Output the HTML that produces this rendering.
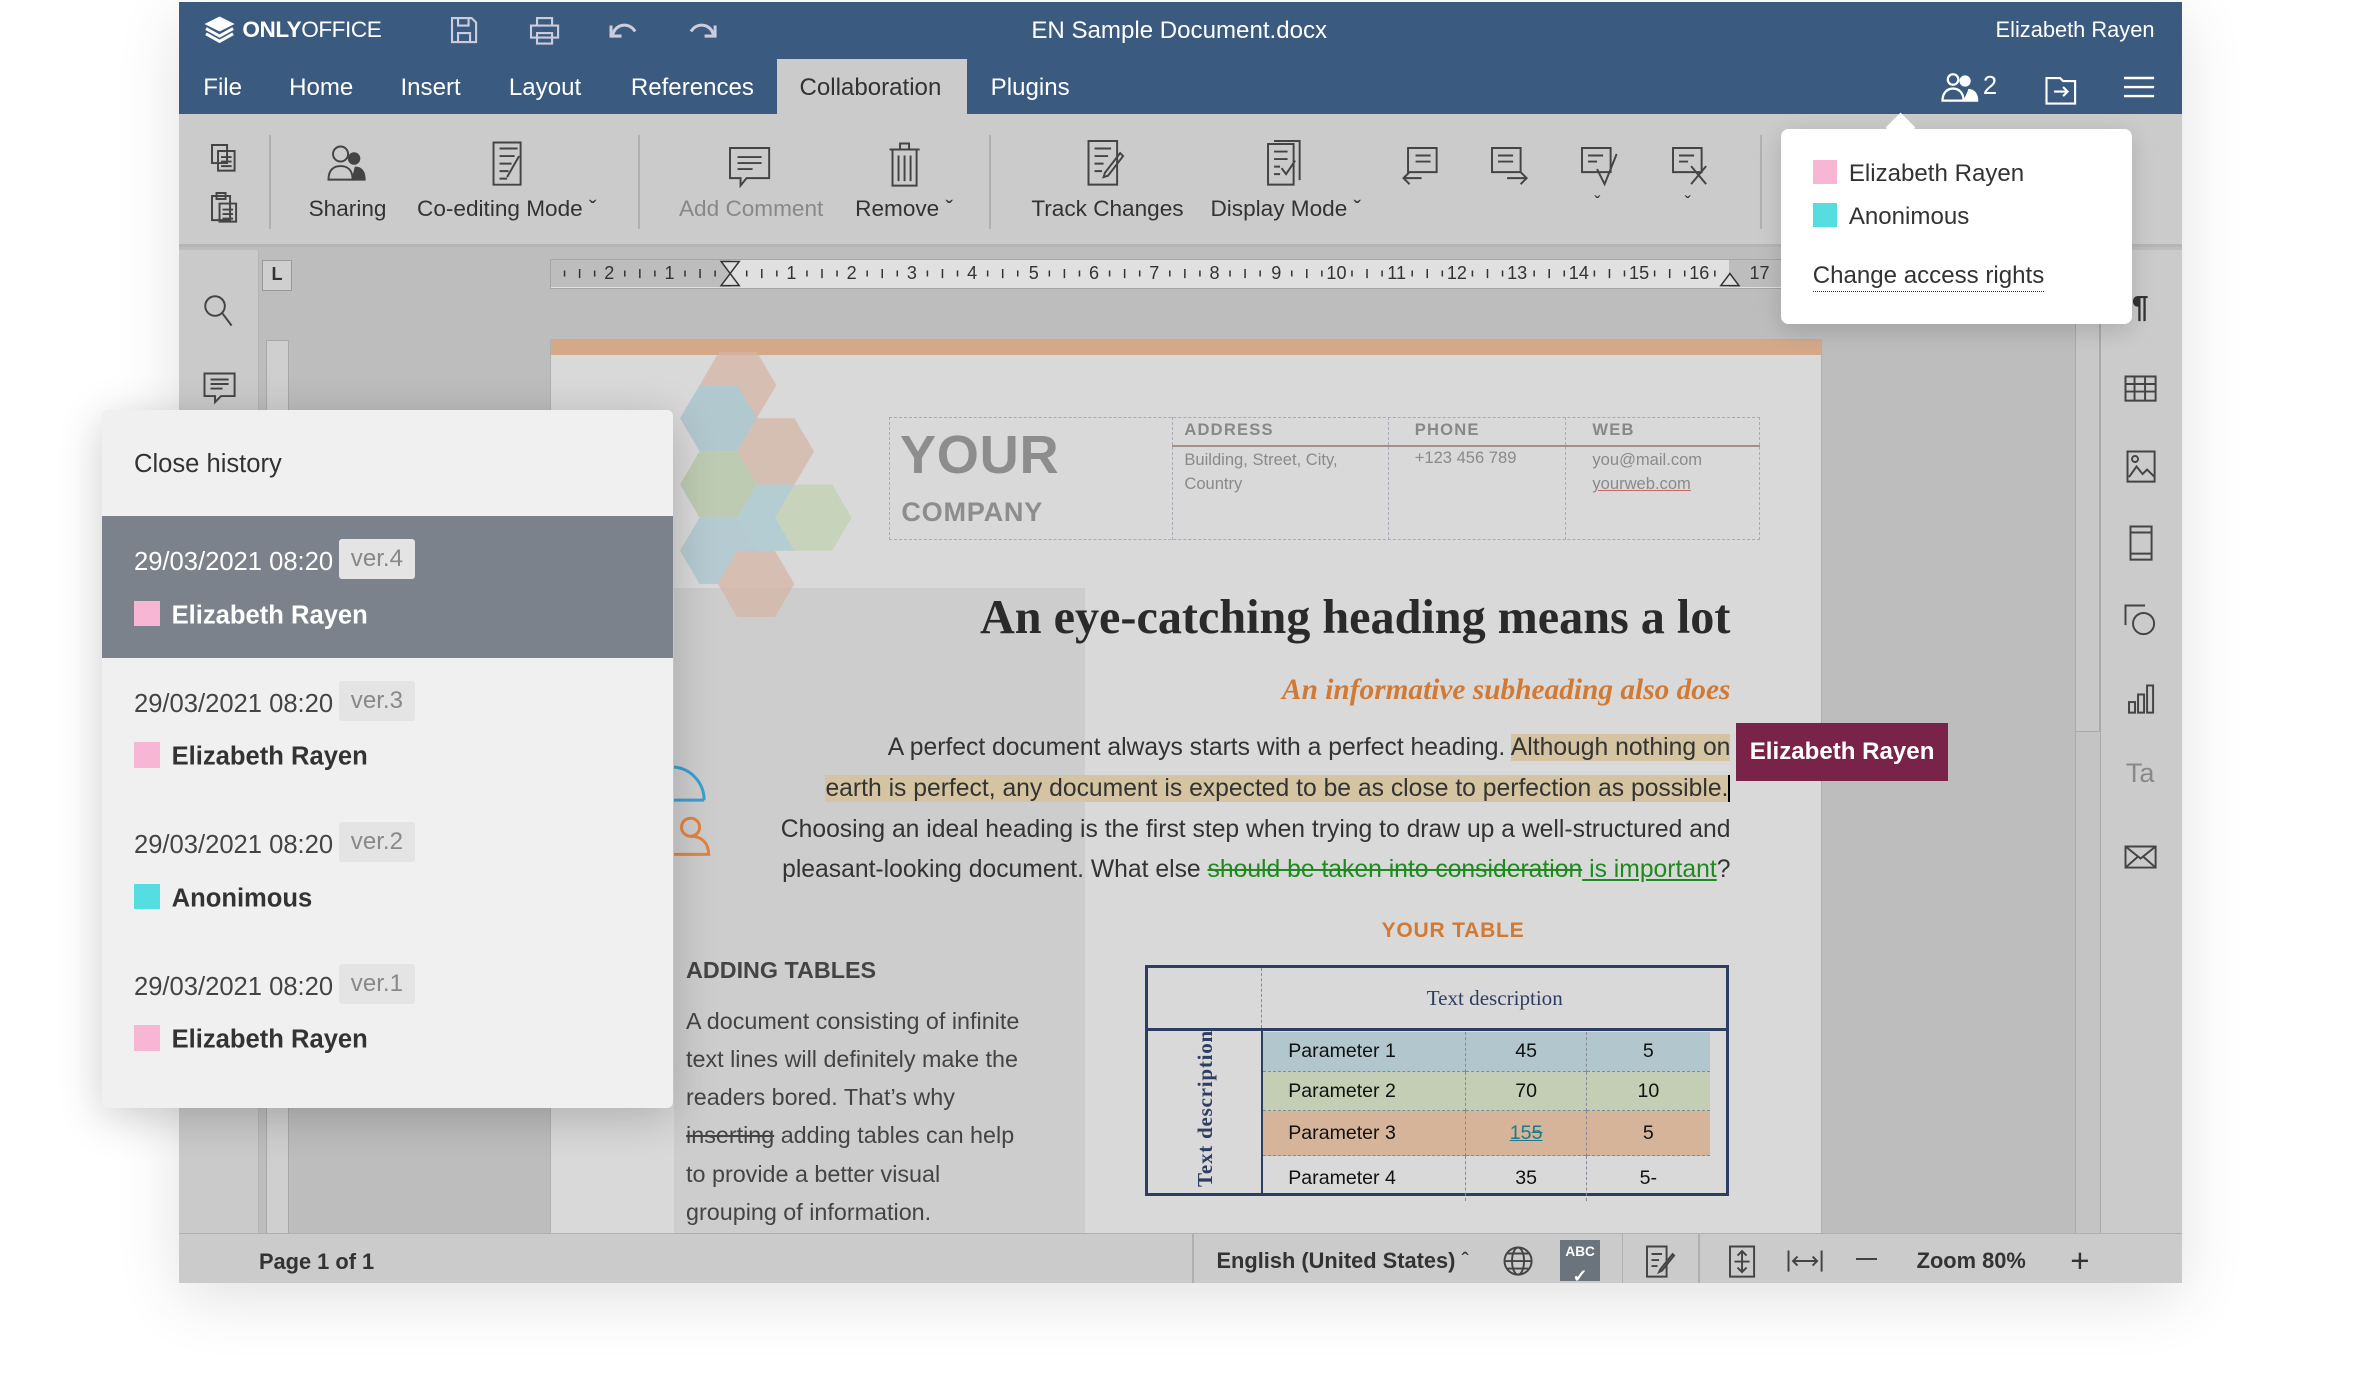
<!DOCTYPE html>
<html><head><meta charset="utf-8"><style>
*{box-sizing:border-box;margin:0;padding:0}
html,body{width:2360px;height:1380px;overflow:hidden;background:#fff}
#z{zoom:1.5056;width:1568px;height:917px;position:relative;font-family:"Liberation Sans",sans-serif;color:#333}
.a{position:absolute}
.win{left:119px;top:1px;width:1330px;height:851px;background:#bdbdbd;box-shadow:0 10px 40px rgba(0,0,0,.12);overflow:hidden}
.top{left:0;top:0;width:1330px;height:75px;background:#3a5a80;color:#fff}
.tab{top:48px;font-size:16px;color:#fff}
.tb{left:0;top:75px;width:1330px;height:88px;background:#cbcbcb;border-bottom:2px solid #b5b5b5}
.lbl{font-size:15px;color:#333;top:54px;white-space:nowrap}
.sep{top:14px;width:1px;height:62px;background:#b0b0b0}
svg.i{position:absolute;fill:none;stroke:#444;stroke-width:1.3}
.page{left:246px;top:224px;width:845px;height:600px;background:#d9d9d9;border:1px solid #b0b0b0;overflow:hidden}
.hist{left:68px;top:272px;width:379px;height:464px;background:#f0f0f0;border-radius:4px;box-shadow:0 6px 30px rgba(0,0,0,.2);overflow:hidden}
.it{position:absolute;left:0;width:379px;height:94px}
.dt{position:absolute;left:21px;top:21px;font-size:17px;color:#444}
.vr{position:absolute;left:157px;top:15px;background:#e4e4e4;color:#888;font-size:16px;padding:4px 8px;border-radius:2px}
.nm{position:absolute;left:21px;top:56px;font-size:17px;font-weight:bold;color:#333}
.sq{display:inline-block;width:17px;height:17px;vertical-align:-2px;margin-right:8px}
.body{font-size:16.4px;color:#333;line-height:27px}
td{font-size:13px;padding:0 6px}
.rn{position:absolute;top:0;font-size:12px;transform:translateX(-50%)}
</style></head><body><div id="z">
<div class="a win">
 <div class="a top">
  <svg class="a" style="left:16px;top:9px" width="22" height="20" viewBox="0 0 22 20"><path d="M11 1 L21 6 L11 11 L1 6Z" fill="#fff"/><path d="M2 9 L11 14 L20 9 M2 12.5 L11 17.5 L20 12.5" stroke="#fff" stroke-width="2" fill="none"/></svg>
  <div class="a" style="left:42px;top:10px;font-size:15px;font-weight:bold;letter-spacing:-.3px">ONLY<span style="font-weight:normal">OFFICE</span></div>
  <svg class="a" style="left:179px;top:9px" width="20" height="20" viewBox="0 0 20 20" fill="none" stroke="#ccd" stroke-width="1.4"><path d="M2 2h13l3 3v13H2z M6 2v5h7V2 M6 18v-6h8v6"/></svg>
  <svg class="a" style="left:232px;top:9px" width="22" height="20" viewBox="0 0 22 20" fill="none" stroke="#ccd" stroke-width="1.4"><path d="M6 7V2h10v5 M2 7h18v8H2z M6 12h10v7H6z"/></svg>
  <svg class="a" style="left:285px;top:11px" width="20" height="14" viewBox="0 0 20 14" fill="none" stroke="#ccd" stroke-width="2"><path d="M3 12C4 4 14 2 18 9 M2 5v7h7"/></svg>
  <svg class="a" style="left:338px;top:11px" width="20" height="14" viewBox="0 0 20 14" fill="none" stroke="#ccd" stroke-width="2"><path d="M17 12C16 4 6 2 2 9 M18 5v7h-7"/></svg>
  <div class="a" style="left:566px;top:10px;font-size:16px">EN Sample Document.docx</div>
  <div class="a" style="right:18px;top:10px;font-size:14.5px">Elizabeth Rayen</div>
  <div class="a tab" style="left:16px">File</div>
  <div class="a tab" style="left:73px">Home</div>
  <div class="a tab" style="left:147px">Insert</div>
  <div class="a tab" style="left:219px">Layout</div>
  <div class="a tab" style="left:300px">References</div>
  <div class="a" style="left:397px;top:38px;width:126px;height:37px;background:#cbcbcb"></div>
  <div class="a tab" style="left:412px;color:#333">Collaboration</div>
  <div class="a tab" style="left:539px">Plugins</div>
  <svg class="a" style="left:1170px;top:47px" width="26" height="20" viewBox="0 0 26 20" fill="none" stroke="#fff" stroke-width="1.5"><circle cx="8" cy="5" r="3.5"/><path d="M1 19c0-5 3-8 7-8s7 3 7 8z"/><circle cx="16" cy="6" r="3" fill="#fff"/><path d="M15 19h9c0-4-2-7-6-7" fill="#fff"/></svg>
  <div class="a" style="left:1198px;top:47px;font-size:17px">2</div>
  <svg class="a" style="left:1239px;top:47px" width="22" height="22" viewBox="0 0 22 22" fill="none" stroke="#fff" stroke-width="1.4"><path d="M1 4h9l2 2h8v15H1z M6 13h9 M12 10l3 3-3 3"/></svg>
  <svg class="a" style="left:1292px;top:49px" width="20" height="16" viewBox="0 0 20 16" stroke="#fff" stroke-width="1.6"><path d="M0 2h20M0 8h20M0 14h20"/></svg>
 </div>
 <div class="a tb">
  <svg class="i" style="left:20px;top:18px" width="20" height="20" viewBox="0 0 20 20" stroke="#999"><path d="M2 2h10v12H2z M6 6h11v13H6z M8 10h7M8 13h7M8 16h7"/></svg>
  <svg class="i" style="left:20px;top:50px" width="20" height="22" viewBox="0 0 20 22"><path d="M2 4h12v16H2z M5 2h6v4H5z M7 9h11v12H7z M9 13h7M9 16h7M9 19h7"/></svg>
  <div class="a sep" style="left:60px"></div>
  <svg class="i" style="left:98px;top:20px" width="26" height="24" viewBox="0 0 26 24"><circle cx="9" cy="6" r="5"/><path d="M1 23c0-6 3-9 8-9s8 3 8 9z"/><circle cx="18" cy="9" r="3.5" fill="#444"/><path d="M17 23h8c0-5-2-8-6-8z" fill="#444"/></svg>
  <div class="a lbl" style="left:86px">Sharing</div>
  <svg class="i" style="left:206px;top:16px" width="26" height="32" viewBox="0 0 26 32"><path d="M3 3h18v28H3z M7 7h12M7 12h10M7 17h8M7 22h6M7 27h5 M20 12l-8 14"/></svg>
  <div class="a lbl" style="left:158px">Co-editing Mode &#711;</div>
  <div class="a sep" style="left:305px"></div>
  <svg class="i" style="left:364px;top:20px" width="30" height="30" viewBox="0 0 30 30" stroke="#999"><path d="M2 2h26v20H13l-4 5v-5H2z M7 8h16M7 12h16M7 16h10"/></svg>
  <div class="a lbl" style="left:332px;color:#888">Add Comment</div>
  <svg class="i" style="left:471px;top:18px" width="22" height="30" viewBox="0 0 22 30"><path d="M1 5h20 M8 5V1h6v4 M3 5v24h16V5 M7 9v17M11 9v17M15 9v17"/></svg>
  <div class="a lbl" style="left:449px">Remove &#711;</div>
  <div class="a sep" style="left:538px"></div>
  <svg class="i" style="left:601px;top:16px" width="30" height="32" viewBox="0 0 30 32"><path d="M3 2h19v29H3z M7 7h11M7 12h9M7 17h6M7 22h5 M26 12l-10 13-3 1 1-3 10-13z"/></svg>
  <div class="a lbl" style="left:566px">Track Changes</div>
  <svg class="i" style="left:719px;top:16px" width="30" height="32" viewBox="0 0 30 32"><path d="M4 4h17v27H4z M8 2h17v26 M8 9h9M8 14h9M8 19h4M8 24h4 M13 20l3 4 6-9"/></svg>
  <div class="a lbl" style="left:685px">Display Mode &#711;</div>
  <svg class="i" style="left:810px;top:20px" width="28" height="28" viewBox="0 0 28 28" stroke-width="1.6"><path d="M6 2h19v16H6z M11 7h10M11 11h10M15 22H3m4-4-4 4 4 4"/></svg>
  <svg class="i" style="left:870px;top:20px" width="28" height="28" viewBox="0 0 28 28" stroke-width="1.6"><path d="M2 2h19v16H2z M6 7h10M6 11h10M12 22h13m-4-4 4 4-4 4"/></svg>
  <svg class="i" style="left:930px;top:20px" width="28" height="28" viewBox="0 0 28 28" stroke-width="1.6"><path d="M2 2h19v16H2z M6 7h10M6 11h6 M12 16l5 10 8-20"/></svg>
  <div class="a lbl" style="left:940px;top:52px;font-size:12px">&#711;</div>
  <svg class="i" style="left:990px;top:20px" width="28" height="28" viewBox="0 0 28 28" stroke-width="1.6"><path d="M2 2h19v16H2z M6 7h10M6 11h6 M14 14l10 12M24 14 14 26"/></svg>
  <div class="a lbl" style="left:1000px;top:52px;font-size:12px">&#711;</div>
  <div class="a sep" style="left:1050px"></div>
 </div>
 <!-- left sidebar -->
 <div class="a" style="left:0;top:165px;width:53px;height:660px;background:#cacaca;border-right:1px solid #b5b5b5"></div>
 <svg class="i" style="left:16px;top:194px" width="20" height="22" viewBox="0 0 20 22" stroke-width="1.5"><circle cx="8" cy="8" r="6.5"/><path d="M13 13l6 8"/></svg>
 <svg class="i" style="left:16px;top:246px" width="22" height="22" viewBox="0 0 22 22" stroke-width="1.5"><path d="M1 1h20v15H12l-4 4v-4H1z M5 5h12M5 8h12M5 11h8"/></svg>
 <!-- ruler -->
 <div class="a" style="left:55px;top:172px;width:20px;height:20px;border:1px solid #999;background:#cfcfcf;font-size:12px;font-weight:bold;text-align:center;line-height:18px">L</div>
 <div class="a" style="left:58px;top:225px;width:15px;height:600px;background:#cfcfcf;border:1px solid #a8a8a8"></div>
 <div class="a" style="left:246px;top:171px;width:820px;height:20px;background:#e0e0e0;border:1px solid #a5a5a5;line-height:18px;white-space:nowrap;overflow:hidden;color:#333">
  <div class="a" style="left:0;top:0;width:120px;height:18px;background:#bdbdbd"></div>
  <div class="a" style="left:783px;top:0;width:40px;height:18px;background:#bdbdbd"></div>
  <span class="rn" style="left:39px">2</span><span class="rn" style="left:79px">1</span>
  <span class="rn" style="left:160px">1</span><span class="rn" style="left:200px">2</span><span class="rn" style="left:240px">3</span><span class="rn" style="left:280px">4</span><span class="rn" style="left:321px">5</span><span class="rn" style="left:361px">6</span><span class="rn" style="left:401px">7</span><span class="rn" style="left:441px">8</span><span class="rn" style="left:482px">9</span><span class="rn" style="left:522px">10</span><span class="rn" style="left:562px">11</span><span class="rn" style="left:602px">12</span><span class="rn" style="left:642px">13</span><span class="rn" style="left:683px">14</span><span class="rn" style="left:723px">15</span><span class="rn" style="left:763px">16</span><span class="rn" style="left:803px">17</span>
  <svg class="a" style="left:0;top:0" width="820" height="18"><g stroke="#333" stroke-width="1">
   <path d="M9 7v4M19 6v6M29 7v4M49 7v4M59 6v6M69 7v4M89 7v4M99 6v6M109 7v4M130 7v4M140 6v6M150 7v4M170 7v4M180 6v6M190 7v4M210 7v4M220 6v6M230 7v4M250 7v4M260 6v6M270 7v4M290 7v4M300 6v6M310 7v4M331 7v4M341 6v6M351 7v4M371 7v4M381 6v6M391 7v4M411 7v4M421 6v6M431 7v4M451 7v4M461 6v6M471 7v4M492 7v4M502 6v6M512 7v4M532 7v4M542 6v6M552 7v4M572 7v4M582 6v6M592 7v4M612 7v4M622 6v6M632 7v4M653 7v4M663 6v6M673 7v4M693 7v4M703 6v6M713 7v4M733 7v4M743 6v6M753 7v4M773 7v4"/>
   <path d="M113 1h12l-6 8zM119 9l-6 8h12z" fill="#ddd"/><path d="M777 17l6-8 6 8z" fill="#ddd"/></g></svg>
 </div>
 <!-- right panel -->
 <div class="a" style="left:1259px;top:165px;width:17px;height:655px;background:#c4c4c4;border-left:1px solid #aaa"></div>
 <div class="a" style="left:1259px;top:200px;width:17px;height:285px;background:#c8c8c8;border:1px solid #aaa"></div>
 <div class="a" style="left:1276px;top:165px;width:54px;height:660px;background:#cbcbcb;border-left:1px solid #aaa"></div>
 <div class="a" style="left:1297px;top:192px;font-size:20px;font-weight:bold;color:#333">&#182;</div>
 <svg class="i" style="left:1292px;top:248px" width="22" height="18" viewBox="0 0 22 18" stroke="#888"><path d="M1 1h20v16H1z M1 6h20M1 11h20M7 1v16M14 1v16"/></svg>
 <svg class="i" style="left:1293px;top:298px" width="20" height="22" viewBox="0 0 20 22" stroke="#888"><path d="M1 1h18v20H1z M2 18l5-7 4 5 3-3 5 5"/><circle cx="6" cy="6" r="2"/></svg>
 <svg class="i" style="left:1295px;top:348px" width="16" height="24" viewBox="0 0 16 24" stroke="#888"><path d="M1 1h14v22H1z M1 5h14M1 19h14"/></svg>
 <svg class="i" style="left:1292px;top:400px" width="22" height="22" viewBox="0 0 22 22" stroke="#888"><path d="M1 14V1h13"/><circle cx="13" cy="13" r="7"/></svg>
 <svg class="i" style="left:1293px;top:453px" width="20" height="20" viewBox="0 0 20 20" stroke="#888"><path d="M2 12h4v7H2z M8 7h4v12H8z M14 1h4v18h-4z"/></svg>
 <div class="a" style="left:1293px;top:502px;font-size:18px;color:#888">Ta</div>
 <svg class="i" style="left:1292px;top:560px" width="22" height="16" viewBox="0 0 22 16" stroke="#888"><path d="M1 1h20v14H1z M1 1l10 8 10-8M1 15l8-7M21 15l-8-7"/></svg>
 <!-- page -->
 <div class="a page">
  <div class="a" style="left:0;top:0;width:845px;height:10px;background:#d4a98a"></div>
  <div class="a" style="left:82px;top:165px;width:273px;height:440px;background:#cdcdcd"></div>
  <svg class="a" style="left:82px;top:8px" width="120" height="190" viewBox="0 0 120 190" opacity=".75">
   <polygon points="30,0 55,0 68,22 55,44 30,44 17,22" fill="#d5b6a5"/>
   <polygon points="17,22 42,22 55,44 42,66 17,66 4,44" fill="#a5c3cc"/>
   <polygon points="55,44 80,44 93,66 80,88 55,88 42,66" fill="#d4b6a5"/>
   <polygon points="17,66 42,66 55,88 42,110 17,110 4,88" fill="#b4c7a5"/>
   <polygon points="55,88 80,88 93,110 80,132 55,132 42,110" fill="#a7c9d1"/>
   <polygon points="80,88 105,88 118,110 105,132 80,132 67,110" fill="#c1d2b0"/>
   <polygon points="17,110 42,110 55,132 42,154 17,154 4,132" fill="#a9c5cf"/>
   <polygon points="42,132 67,132 80,154 67,176 42,176 29,154" fill="#d5b6a5"/>
  </svg>
  <div class="a" style="left:225px;top:51px;width:578px;height:82px;border:1px dashed #aab"></div>
  <div class="a" style="left:232px;top:56px;font-size:36px;font-weight:bold;color:#8d8d8d;letter-spacing:.5px">YOUR</div>
  <div class="a" style="left:233px;top:104px;font-size:18px;font-weight:bold;color:#8d8d8d;letter-spacing:.5px">COMPANY</div>
  <div class="a" style="left:413px;top:51px;width:1px;height:82px;border-left:1px dashed #aab"></div>
  <div class="a" style="left:556px;top:51px;width:1px;height:82px;border-left:1px dashed #aab"></div>
  <div class="a" style="left:674px;top:51px;width:1px;height:82px;border-left:1px dashed #aab"></div>
  <div class="a" style="left:413px;top:70px;width:390px;height:1px;background:#a09088"></div>
  <div class="a" style="left:421px;top:53px;font-size:11px;font-weight:bold;color:#888;letter-spacing:.8px">ADDRESS</div>
  <div class="a" style="left:574px;top:53px;font-size:11px;font-weight:bold;color:#888;letter-spacing:.8px">PHONE</div>
  <div class="a" style="left:692px;top:53px;font-size:11px;font-weight:bold;color:#888;letter-spacing:.8px">WEB</div>
  <div class="a" style="left:421px;top:72px;font-size:11px;color:#8a8a8a;line-height:16px">Building, Street, City,<br>Country</div>
  <div class="a" style="left:574px;top:72px;font-size:11px;color:#8a8a8a">+123 456 789</div>
  <div class="a" style="left:692px;top:72px;font-size:11px;color:#8a8a8a;line-height:16px">you@mail.com<br><span style="text-decoration:underline;text-decoration-color:#c66">yourweb.com</span></div>
  <div class="a" style="right:60px;top:166px;font-family:'Liberation Serif',serif;font-size:32px;font-weight:bold;color:#2a2a2a;white-space:nowrap">An eye-catching heading means a lot</div>
  <div class="a" style="right:60px;top:222px;font-family:'Liberation Serif',serif;font-size:19.5px;font-style:italic;font-weight:bold;color:#d27a34;white-space:nowrap">An informative subheading also does</div>
  <div class="a body" style="right:60px;top:258px;text-align:right;white-space:nowrap">A perfect document always starts with a perfect heading. <span style="background:#d4c4a2">Although nothing on</span><br><span style="background:#d4c4a2">earth is perfect, any document is expected to be as close to perfection as possible.</span><span style="border-right:1.5px solid #000"></span><br>Choosing an ideal heading is the first step when trying to draw up a well-structured and<br>pleasant-looking document. What else <span style="color:#1e8a1e;text-decoration:line-through">should be taken into consideration</span><span style="color:#1e8a1e;text-decoration:underline"> is important</span>?</div>
  <svg class="a" style="left:82px;top:280px" width="30" height="66" viewBox="0 0 30 66" fill="none" stroke-width="2"><path d="M0 4a22 22 0 0 1 20 22 M0 26h20" stroke="#3a9fd0"/><circle cx="11" cy="44" r="6" stroke="#e08440"/><path d="M0 62h23c0-8-5-12-12-12" stroke="#e08440"/></svg>
  <div class="a" style="left:552px;top:385px;font-size:14px;font-weight:bold;color:#d27a34;letter-spacing:.5px">YOUR TABLE</div>
  <div class="a" style="left:90px;top:410px;font-size:15.5px;font-weight:bold;color:#444">ADDING TABLES</div>
  <div class="a" style="left:90px;top:440px;font-size:15.5px;color:#444;line-height:25.3px">A document consisting of infinite<br>text lines will definitely make the<br>readers bored. That’s why<br><s>inserting</s> adding tables can help<br>to provide a better visual<br>grouping of information.</div>
  <div class="a" style="left:395px;top:415px;width:388px;height:154px;border:2px solid #2e3e62">
   <div class="a" style="left:75px;top:0;width:1px;height:40px;border-left:1px dashed #889"></div>
   <div class="a" style="left:185px;top:12px;font-family:'Liberation Serif',serif;font-size:14px;color:#2e3e62">Text description</div>
   <div class="a" style="left:0;top:40px;width:384px;height:2px;background:#2e3e62"></div>
   <div class="a" style="left:75px;top:42px;width:1px;height:110px;background:#2e3e62"></div>
   <div class="a" style="left:30px;top:146px;transform:rotate(-90deg);transform-origin:0 0;font-family:'Liberation Serif',serif;font-weight:bold;font-size:14px;color:#2e3e62;white-space:nowrap;letter-spacing:.5px">Text description</div>
   <table class="a" style="left:76px;top:43px;width:297px;border-collapse:collapse;color:#111;table-layout:fixed">
    <tr style="background:#b2c6cd;height:26px"><td style="width:135px;padding-left:17px">Parameter 1</td><td style="width:80px;text-align:center;border-left:1px dashed #889">45</td><td style="width:82px;text-align:center;border-left:1px dashed #889">5</td></tr>
    <tr style="background:#c4ceb4;height:26px;border-top:1px dashed #889"><td style="padding-left:17px">Parameter 2</td><td style="text-align:center;border-left:1px dashed #889">70</td><td style="text-align:center;border-left:1px dashed #889">10</td></tr>
    <tr style="background:#d5b49a;height:30px;border-top:1px dashed #889"><td style="padding-left:17px">Parameter 3</td><td style="text-align:center;border-left:1px dashed #889;color:#1a7a8a;text-decoration:underline">15<s>5</s></td><td style="text-align:center;border-left:1px dashed #889">5</td></tr>
    <tr style="height:30px;border-top:1px dashed #889"><td style="padding-left:17px">Parameter 4</td><td style="text-align:center;border-left:1px dashed #889">35</td><td style="text-align:center;border-left:1px dashed #889">5-</td></tr>
   </table>
  </div>
 </div>
 <div class="a" style="left:1034px;top:479px;width:141px;height:39px;background:#7a2349;color:#fff;font-size:16px;font-weight:bold;line-height:39px;text-align:center">Elizabeth Rayen</div>
 <!-- status bar -->
 <div class="a" style="left:0;top:818px;width:1330px;height:34px;background:#cbcbcb;border-top:1px solid #b0b0b0;font-size:14.5px;font-weight:bold;color:#333">
  <div class="a" style="left:53px;top:10px">Page 1 of 1</div>
  <div class="a" style="left:673px;top:0;width:1px;height:34px;background:#b0b0b0"></div>
  <div class="a" style="left:689px;top:9px">English (United States) <span style="font-weight:normal">&#710;</span></div>
  <svg class="i" style="left:879px;top:8px" width="20" height="20" viewBox="0 0 20 20"><circle cx="10" cy="10" r="9"/><ellipse cx="10" cy="10" rx="4" ry="9"/><path d="M1 10h18M3 5h14M3 15h14"/></svg>
  <div class="a" style="left:917px;top:4px;width:27px;height:27px;background:#6b737c;color:#fff;font-size:9px;text-align:center;line-height:16px">ABC<br><span style="font-size:12px">&#10003;</span></div>
  <div class="a" style="left:958px;top:0;width:1px;height:34px;background:#b0b0b0"></div>
  <svg class="i" style="left:973px;top:7px" width="22" height="22" viewBox="0 0 22 22"><path d="M2 1h13v20H2z M5 6h7M5 10h5M5 14h4 M20 7l-8 10-2 1 1-2 8-10z"/></svg>
  <div class="a" style="left:1009px;top:0;width:1px;height:34px;background:#b0b0b0"></div>
  <svg class="i" style="left:1028px;top:7px" width="20" height="22" viewBox="0 0 20 22"><path d="M2 1h16v20H2z M10 4v14M7 7l3-3 3 3M7 15l3 3 3-3M5 11h10"/></svg>
  <svg class="i" style="left:1068px;top:10px" width="24" height="16" viewBox="0 0 24 16"><path d="M1 1v14M23 1v14M4 8h16M7 5 4 8l3 3M17 5l3 3-3 3"/></svg>
  <div class="a" style="left:1114px;top:16px;width:14px;height:1.5px;background:#444"></div>
  <div class="a" style="left:1154px;top:9px">Zoom 80%</div>
  <div class="a" style="left:1256px;top:6px;font-size:22px;font-weight:normal">+</div>
 </div>
</div>
<!-- history panel -->
<div class="a hist">
 <div class="a" style="left:21px;top:27px;font-size:17px;color:#333">Close history</div>
 <div class="it" style="top:71px;background:#7c828b"><div class="dt" style="color:#fff">29/03/2021 08:20</div><div class="vr" style="background:#e4e4e4">ver.4</div><div class="nm" style="color:#fff"><span class="sq" style="background:#f7b6d3"></span>Elizabeth Rayen</div></div>
 <div class="it" style="top:165px"><div class="dt">29/03/2021 08:20</div><div class="vr">ver.3</div><div class="nm"><span class="sq" style="background:#f7b6d3"></span>Elizabeth Rayen</div></div>
 <div class="it" style="top:259px"><div class="dt">29/03/2021 08:20</div><div class="vr">ver.2</div><div class="nm"><span class="sq" style="background:#55dde0"></span>Anonimous</div></div>
 <div class="it" style="top:353px"><div class="dt">29/03/2021 08:20</div><div class="vr">ver.1</div><div class="nm"><span class="sq" style="background:#f7b6d3"></span>Elizabeth Rayen</div></div>
</div>
<!-- users popup -->
<div class="a" style="left:1183px;top:86px;width:233px;height:129px;background:#fff;border-radius:5px;box-shadow:0 4px 16px rgba(0,0,0,.15)">
 <div class="a" style="left:72px;top:-8px;width:14px;height:14px;background:#fff;transform:rotate(45deg)"></div>
 <div class="a" style="left:21px;top:20px;font-size:16px;color:#333"><span class="sq" style="background:#f7b6d3;width:16px;height:16px"></span>Elizabeth Rayen</div>
 <div class="a" style="left:21px;top:49px;font-size:16px;color:#333"><span class="sq" style="background:#55dde0;width:16px;height:16px"></span>Anonimous</div>
 <div class="a" style="left:21px;top:88px;font-size:16px;color:#333;border-bottom:1px dotted #333;padding-bottom:1px">Change access rights</div>
</div>
</div></body></html>
